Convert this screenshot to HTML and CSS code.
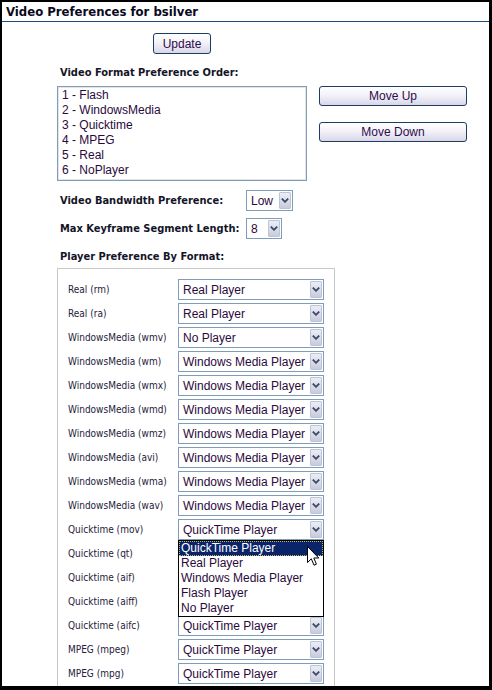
FILE: index.html
```html
<!DOCTYPE html>
<html>
<head>
<meta charset="utf-8">
<title>Video Preferences</title>
<link rel="stylesheet" href="styles.css">
</head>
<body>
<div class="frame">
  <div class="title">Video Preferences for bsilver</div>
  <div class="content">
    <div class="update-row"><button class="btn btn-update">Update</button></div>
    <div class="label label-order">Video Format Preference Order:</div>
    <div class="order-row">
      <div class="listbox">
        <div class="opt">1 - Flash</div>
        <div class="opt">2 - WindowsMedia</div>
        <div class="opt">3 - Quicktime</div>
        <div class="opt">4 - MPEG</div>
        <div class="opt">5 - Real</div>
        <div class="opt">6 - NoPlayer</div>
      </div>
      <div class="move-btns">
        <button class="btn btn-move">Move Up</button>
        <button class="btn btn-move">Move Down</button>
      </div>
    </div>
    <div class="pref-grid">
      <div class="label">Video Bandwidth Preference:</div>
      <div class="select sel-low"><span class="val">Low</span><span class="arrow"><svg width="8" height="5" viewBox="0 0 8 5"><path d="M0.8 0.6 L4 3.8 L7.2 0.6" fill="none" stroke="#3d4868" stroke-width="1.8"/></svg></span></div>
      <div class="label">Max Keyframe Segment Length:</div>
      <div class="select sel-8"><span class="val">8</span><span class="arrow"><svg width="8" height="5" viewBox="0 0 8 5"><path d="M0.8 0.6 L4 3.8 L7.2 0.6" fill="none" stroke="#3d4868" stroke-width="1.8"/></svg></span></div>
    </div>
    <div class="label label-player">Player Preference By Format:</div>
    <div class="player-box">
      <div class="fmt">Real (rm)</div>
      <div class="select"><span class="val">Real Player</span><span class="arrow"><svg width="8" height="5" viewBox="0 0 8 5"><path d="M0.8 0.6 L4 3.8 L7.2 0.6" fill="none" stroke="#3d4868" stroke-width="1.8"/></svg></span></div>
      <div class="fmt">Real (ra)</div>
      <div class="select"><span class="val">Real Player</span><span class="arrow"><svg width="8" height="5" viewBox="0 0 8 5"><path d="M0.8 0.6 L4 3.8 L7.2 0.6" fill="none" stroke="#3d4868" stroke-width="1.8"/></svg></span></div>
      <div class="fmt">WindowsMedia (wmv)</div>
      <div class="select"><span class="val">No Player</span><span class="arrow"><svg width="8" height="5" viewBox="0 0 8 5"><path d="M0.8 0.6 L4 3.8 L7.2 0.6" fill="none" stroke="#3d4868" stroke-width="1.8"/></svg></span></div>
      <div class="fmt">WindowsMedia (wm)</div>
      <div class="select"><span class="val">Windows Media Player</span><span class="arrow"><svg width="8" height="5" viewBox="0 0 8 5"><path d="M0.8 0.6 L4 3.8 L7.2 0.6" fill="none" stroke="#3d4868" stroke-width="1.8"/></svg></span></div>
      <div class="fmt">WindowsMedia (wmx)</div>
      <div class="select"><span class="val">Windows Media Player</span><span class="arrow"><svg width="8" height="5" viewBox="0 0 8 5"><path d="M0.8 0.6 L4 3.8 L7.2 0.6" fill="none" stroke="#3d4868" stroke-width="1.8"/></svg></span></div>
      <div class="fmt">WindowsMedia (wmd)</div>
      <div class="select"><span class="val">Windows Media Player</span><span class="arrow"><svg width="8" height="5" viewBox="0 0 8 5"><path d="M0.8 0.6 L4 3.8 L7.2 0.6" fill="none" stroke="#3d4868" stroke-width="1.8"/></svg></span></div>
      <div class="fmt">WindowsMedia (wmz)</div>
      <div class="select"><span class="val">Windows Media Player</span><span class="arrow"><svg width="8" height="5" viewBox="0 0 8 5"><path d="M0.8 0.6 L4 3.8 L7.2 0.6" fill="none" stroke="#3d4868" stroke-width="1.8"/></svg></span></div>
      <div class="fmt">WindowsMedia (avi)</div>
      <div class="select"><span class="val">Windows Media Player</span><span class="arrow"><svg width="8" height="5" viewBox="0 0 8 5"><path d="M0.8 0.6 L4 3.8 L7.2 0.6" fill="none" stroke="#3d4868" stroke-width="1.8"/></svg></span></div>
      <div class="fmt">WindowsMedia (wma)</div>
      <div class="select"><span class="val">Windows Media Player</span><span class="arrow"><svg width="8" height="5" viewBox="0 0 8 5"><path d="M0.8 0.6 L4 3.8 L7.2 0.6" fill="none" stroke="#3d4868" stroke-width="1.8"/></svg></span></div>
      <div class="fmt">WindowsMedia (wav)</div>
      <div class="select"><span class="val">Windows Media Player</span><span class="arrow"><svg width="8" height="5" viewBox="0 0 8 5"><path d="M0.8 0.6 L4 3.8 L7.2 0.6" fill="none" stroke="#3d4868" stroke-width="1.8"/></svg></span></div>
      <div class="fmt">Quicktime (mov)</div>
      <div class="select open"><span class="val">QuickTime Player</span><span class="arrow"><svg width="8" height="5" viewBox="0 0 8 5"><path d="M0.8 0.6 L4 3.8 L7.2 0.6" fill="none" stroke="#3d4868" stroke-width="1.8"/></svg></span>
        <div class="dropdown">
          <div class="dd-opt active">QuickTime Player</div>
          <div class="dd-opt">Real Player</div>
          <div class="dd-opt">Windows Media Player</div>
          <div class="dd-opt">Flash Player</div>
          <div class="dd-opt">No Player</div>
        </div>
        <svg class="cursor" width="13" height="21" viewBox="0 0 13 21"><path d="M0.5 0.5 L0.5 16.5 L4.3 12.8 L7 19.2 L9.4 18.2 L6.8 12 L11.8 12 Z" fill="#fff" stroke="#000" stroke-width="1" stroke-linejoin="miter"/></svg>
      </div>
      <div class="fmt">Quicktime (qt)</div>
      <div class="select"><span class="val">QuickTime Player</span><span class="arrow"><svg width="8" height="5" viewBox="0 0 8 5"><path d="M0.8 0.6 L4 3.8 L7.2 0.6" fill="none" stroke="#3d4868" stroke-width="1.8"/></svg></span></div>
      <div class="fmt">Quicktime (aif)</div>
      <div class="select"><span class="val">QuickTime Player</span><span class="arrow"><svg width="8" height="5" viewBox="0 0 8 5"><path d="M0.8 0.6 L4 3.8 L7.2 0.6" fill="none" stroke="#3d4868" stroke-width="1.8"/></svg></span></div>
      <div class="fmt">Quicktime (aiff)</div>
      <div class="select"><span class="val">QuickTime Player</span><span class="arrow"><svg width="8" height="5" viewBox="0 0 8 5"><path d="M0.8 0.6 L4 3.8 L7.2 0.6" fill="none" stroke="#3d4868" stroke-width="1.8"/></svg></span></div>
      <div class="fmt">Quicktime (aifc)</div>
      <div class="select"><span class="val">QuickTime Player</span><span class="arrow"><svg width="8" height="5" viewBox="0 0 8 5"><path d="M0.8 0.6 L4 3.8 L7.2 0.6" fill="none" stroke="#3d4868" stroke-width="1.8"/></svg></span></div>
      <div class="fmt">MPEG (mpeg)</div>
      <div class="select"><span class="val">QuickTime Player</span><span class="arrow"><svg width="8" height="5" viewBox="0 0 8 5"><path d="M0.8 0.6 L4 3.8 L7.2 0.6" fill="none" stroke="#3d4868" stroke-width="1.8"/></svg></span></div>
      <div class="fmt">MPEG (mpg)</div>
      <div class="select"><span class="val">QuickTime Player</span><span class="arrow"><svg width="8" height="5" viewBox="0 0 8 5"><path d="M0.8 0.6 L4 3.8 L7.2 0.6" fill="none" stroke="#3d4868" stroke-width="1.8"/></svg></span></div>
    </div>
  </div>
</div>
</body>
</html>
```
FILE: styles.css
```css
html, body {
  margin: 0;
  padding: 0;
  background: #fff;
}
.frame {
  position: relative;
  width: 492px;
  height: 690px;
  box-sizing: border-box;
  border-style: solid;
  border-color: #000;
  border-width: 2px 3px 4px 2px;
  overflow: hidden;
  background: #fff;
}
.title {
  height: 19px;
  line-height: 19px;
  padding-left: 4px;
  border-bottom: 1px solid #1f4a7a;
  font-family: "DejaVu Sans Condensed", "Liberation Sans", sans-serif;
  font-weight: bold;
  font-size: 13px;
  color: #0a0a1e;
}
.content {
  padding-left: 55px;
}
.update-row {
  width: 250px;
  display: flex;
  justify-content: center;
  margin-top: 11px;
}
.btn {
  font-family: "Liberation Sans", Arial, sans-serif;
  font-size: 12px;
  color: #2e0c4e;
  border: 1px solid #1c3b66;
  border-radius: 3px;
  background: linear-gradient(#ffffff 0%, #f3f2f8 45%, #d9d7e8 100%);
  padding: 0;
  margin: 0;
  box-sizing: border-box;
}
.btn-update {
  width: 58px;
  height: 21px;
}
.label {
  font-family: "DejaVu Sans Condensed", "Liberation Sans", sans-serif;
  font-weight: bold;
  font-size: 11px;
  color: #141428;
  line-height: 14px;
  padding-left: 3px;
}
.label-order {
  margin-top: 12px;
}
.order-row {
  display: flex;
  gap: 12px;
  margin-top: 6px;
}
.listbox {
  width: 250px;
  height: 95px;
  box-sizing: border-box;
  border: 1px solid #7f9db9;
  box-shadow: inset 0 0 0 1px #e4e4e4;
  padding: 1px 3px;
  font-family: "Liberation Sans", Arial, sans-serif;
  font-size: 12px;
  color: #2a0a3c;
}
.opt {
  height: 15px;
  line-height: 15px;
  padding-left: 1px;
}
.move-btns {
  display: flex;
  flex-direction: column;
  gap: 16px;
}
.btn-move {
  width: 148px;
  height: 20px;
}
.pref-grid {
  display: grid;
  grid-template-columns: 189px auto;
  row-gap: 7px;
  align-items: center;
  margin-top: 9px;
  justify-items: start;
}
.select {
  position: relative;
  display: flex;
  align-items: center;
  height: 21px;
  box-sizing: border-box;
  border: 1px solid #7f9db9;
  background: #fff;
  font-family: "Liberation Sans", Arial, sans-serif;
  font-size: 12px;
  color: #2a0a3c;
}
.select .val {
  flex: 1;
  padding-left: 4px;
  white-space: nowrap;
  overflow: hidden;
}
.select .arrow {
  width: 12px;
  height: 17px;
  margin: 0 1px 0 0;
  box-sizing: border-box;
  border: 1px solid #bcc4d8;
  border-radius: 1px;
  background: linear-gradient(#eceef6, #c9cbdc);
  display: flex;
  align-items: center;
  justify-content: center;
}
.sel-low {
  width: 47px;
}
.sel-8 {
  width: 36px;
}
.label-player {
  margin-top: 11px;
}
.player-box {
  margin-top: 4px;
  width: 278px;
  box-sizing: border-box;
  border: 1px solid #c8c8c8;
  padding: 10px 10px 10px 10px;
  display: grid;
  grid-template-columns: 110px 146px;
  row-gap: 3px;
  align-items: center;
}
.fmt {
  font-family: "DejaVu Sans Condensed", "Liberation Sans", sans-serif;
  font-size: 10px;
  color: #26203a;
}
.dropdown {
  position: absolute;
  left: -1px;
  top: 20px;
  width: 146px;
  box-sizing: border-box;
  border: 1px solid #000;
  background: #fff;
  z-index: 2;
}
.dd-opt {
  height: 15px;
  line-height: 15px;
  padding-left: 2px;
  white-space: nowrap;
}
.dd-opt.active {
  background: #0a246a;
  color: #fff;
  outline: 1px dotted #c8b060;
  outline-offset: -1px;
}
.cursor {
  position: absolute;
  left: 128px;
  top: 26px;
  z-index: 3;
}
```
